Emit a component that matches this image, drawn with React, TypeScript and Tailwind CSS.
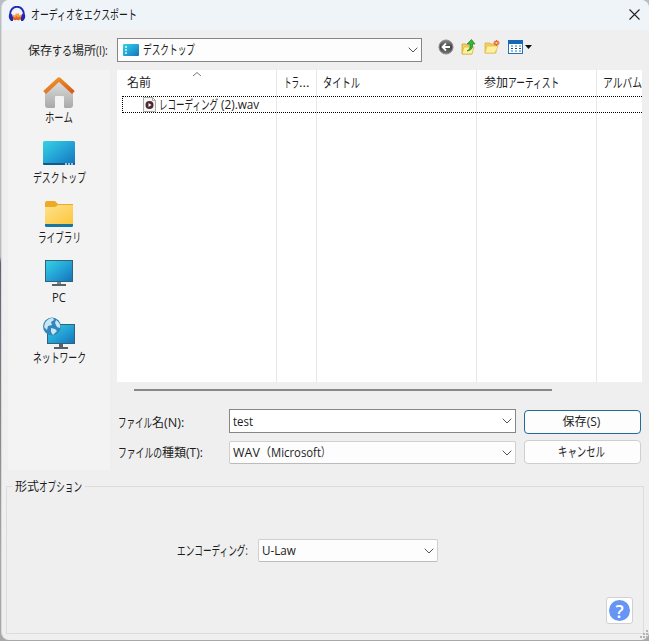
import { ReactNode, useLayoutEffect, useRef } from "react";

type FitProps = { w: number; children: ReactNode; className?: string };

function Fit({ w, children, className = "" }: FitProps) {
  const ref = useRef<HTMLSpanElement>(null);

  useLayoutEffect(() => {
    const el = ref.current;
    if (el) el.style.transform = `scaleX(${w / el.offsetWidth})`;
  }, [w]);

  return (
    <span className={`inline-block shrink-0 ${className}`} style={{ width: w }}>
      <span ref={ref} className="inline-block origin-left whitespace-pre">
        {children}
      </span>
    </span>
  );
}

function Kana({ className = "", ...props }: FitProps) {
  return <Fit {...props} className={`-translate-y-px text-[13px] ${className}`} />;
}

function Chevron() {
  return (
    <svg width="10" height="6" viewBox="0 0 10 6" fill="none" className="shrink-0">
      <path d="M.7.7 5 5 9.3.7" stroke="#555" strokeWidth="1" />
    </svg>
  );
}

function Gradients() {
  return (
    <svg width="0" height="0" className="absolute">
      <defs>
        <linearGradient id="screen" x1="0" y1="0" x2="1" y2="1">
          <stop stopColor="#35d3e3" />
          <stop offset=".5" stopColor="#24a4d6" />
          <stop offset="1" stopColor="#1273b9" />
        </linearGradient>
        <linearGradient id="roof" x1="0" y1="0" x2="1" y2="1">
          <stop stopColor="#f39a2d" />
          <stop offset="1" stopColor="#d65a18" />
        </linearGradient>
        <linearGradient id="wall" x1="0" y1="0" x2="0" y2="1">
          <stop stopColor="#e2e2e2" />
          <stop offset="1" stopColor="#a9a9a9" />
        </linearGradient>
        <linearGradient id="folder" x1="0" y1="0" x2="1" y2="1">
          <stop stopColor="#ffe28a" />
          <stop offset="1" stopColor="#fbc63d" />
        </linearGradient>
        <linearGradient id="back" x1="0" y1="0" x2="0" y2="1">
          <stop stopColor="#8a8a8a" />
          <stop offset=".5" stopColor="#444" />
          <stop offset="1" stopColor="#777" />
        </linearGradient>
      </defs>
    </svg>
  );
}

function HomeIcon() {
  return (
    <svg width="34" height="32" viewBox="0 0 34 32">
      <path d="M3 15 17 3l14 12v14q0 3-3 3h-5q-1 0-1-1V21q0-1-1-1h-7q-1 0-1 1v10q0 1-1 1H6q-3 0-3-3z" fill="url(#wall)" />
      <path d="M2.600 16.500 17 3.300l14.400 13.200" fill="none" stroke="url(#roof)" strokeWidth="4" strokeLinejoin="round" />
    </svg>
  );
}

function DesktopIcon() {
  return (
    <svg width="34" height="32" viewBox="0 0 34 32">
      <rect x="1" y="5" width="32" height="24" rx="1.5" fill="url(#screen)" />
      <path d="M1 27h32v.8q0 1.200-1.500 1.200h-29Q1 29 1 27.800z" fill="#125a89" />
      <path d="M23 28h2m1 0h2m1 0h2" stroke="#c5eefa" strokeWidth="1.5" />
    </svg>
  );
}

function LibraryIcon() {
  return (
    <svg width="34" height="32" viewBox="0 0 34 32">
      <path d="M3 7q0-2 2-2h8l3 3h15v10H3z" fill="#eda928" />
      <path d="M3 11h10l3-2h15v19H3z" fill="url(#folder)" />
      <path d="M3 28h28v1.500q0 1.500-1.500 1.500h-25Q3 31 3 29.500z" fill="#17779f" />
    </svg>
  );
}

function PcIcon() {
  return (
    <svg width="34" height="32" viewBox="0 0 34 32">
      <rect x="3.500" y="4.500" width="27" height="21" fill="url(#screen)" stroke="#34627b" />
      <path d="M15 26h4v3h-4z" fill="#7d8990" />
      <path d="M10 28h14v2H10z" fill="#56616a" />
    </svg>
  );
}

function NetworkIcon() {
  return (
    <svg width="34" height="34" viewBox="0 0 34 34">
      <rect x="5.500" y="8.500" width="27" height="19" fill="url(#screen)" stroke="#34627b" />
      <path d="M17 28h4v3h-4zM12 31h14v2H12z" fill="#56616a" />
      <circle cx="10" cy="10.500" r="9" fill="#3386bb" />
      <path d="M3 7q3-5 8-5l1 2-3 2 1 3-4 1-1 4-3-3zM14 4q5 3 4 8l-3-1-2-4zM9 12l4 1 2 2-4 4-2-3z" fill="#c8e6f4" />
    </svg>
  );
}

const places = [
  { label: "ホーム", w: 28, icon: <HomeIcon /> },
  { label: "デスクトップ", w: 53, icon: <DesktopIcon /> },
  { label: "ライブラリ", w: 43, icon: <LibraryIcon /> },
  { label: "PC", w: 14, icon: <PcIcon /> },
  { label: "ネットワーク", w: 53, icon: <NetworkIcon /> },
];

function TitleBar() {
  return (
    <header className="flex h-[30px] shrink-0 items-center bg-[#eff4f9] pr-[9px] pl-[6px]">
      <svg width="18" height="16" viewBox="0 0 18 16" className="mr-[5px] -mt-[2px]">
        <path d="M4 11.500 5.500 8.500l1.500 1 1-2.500 1 1 1.500-1 1 2.500 2-1 .5 3-1 2.500H5z" fill="#f4a04a" />
        <path d="m4 11.500 2-1 1 1.500 1.500-2 1.500 2 1-1.500 3 1.500-2 1-1.500 1.500-2-1-1.500 1-1.500-1.500z" fill="#e4611c" />
        <path d="M2.200 10C.8-2.200 17.200-2.200 15.800 10" fill="none" stroke="#2429b5" strokeWidth="2" />
        <path d="M1 8.500 4 8q1.500 3.500 1 7H3Q0 12 1 8.500zM17 8.500 14 8q-1.500 3.500-1 7h2q3-3 2-6.500z" fill="#2429b5" />
      </svg>
      <Kana w={106}>オーディオをエクスポート</Kana>
      <svg width="11" height="11" viewBox="0 0 11 11" className="ml-auto -mt-[2px]">
        <path d="m.5.5 10 10m0-10-10 10" stroke="#222" strokeWidth="1.1" />
      </svg>
    </header>
  );
}

function Toolbar() {
  return (
    <div className="flex items-center">
      <svg width="16" height="16" viewBox="0 0 16 16">
        <circle cx="8" cy="8" r="7" fill="url(#back)" stroke="#888" />
        <path d="M12 8H5m3-3.500L4.500 8 8 11.500" fill="none" stroke="#fff" strokeWidth="1.800" />
      </svg>
      <svg width="16" height="16" viewBox="0 0 16 16" className="ml-[7px]">
        <path d="M1 5h4l1 1h5v9H1z" fill="#f3d05d" stroke="#c49b2e" strokeWidth=".7" />
        <path d="m1 15 2-7h10l-2 7z" fill="#fff09b" stroke="#d7b43f" strokeWidth=".7" />
        <path d="M6 12q4-2 3-7H6l4.500-4.500L14 5h-2.500q1 6-5.500 7" fill="#36b53b" stroke="#188324" strokeWidth=".7" />
      </svg>
      <svg width="17" height="16" viewBox="0 0 17 16" className="ml-[7px]">
        <path d="M1 4h5l1 1h5v9H1z" fill="#f3d15f" stroke="#d6aa3b" strokeWidth=".7" />
        <path d="m1 14 2-7h11l-3 7z" fill="#fff0a0" stroke="#e1bb4c" strokeWidth=".7" />
        <path d="M12.500 1v6m-3-3h6m-5-2 4 4m0-4-4 4" stroke="#e66a30" strokeWidth="1.300" />
        <circle cx="12.500" cy="4" r="1.100" fill="#ffe18d" />
      </svg>
      <svg width="16" height="15" viewBox="0 0 16 15" className="ml-[7px]">
        <rect x=".5" y=".5" width="14" height="13" fill="#fff" stroke="#2474b5" />
        <path d="M0 0h15v4H0z" fill="#1768b4" />
        <path d="M3 6h2m2 0h2m2 0h2M3 11h2m2 0h2m2 0h2" stroke="#8fbfda" strokeWidth="2" />
        <path d="M3 8.500h2m2 0h2m2 0h2" stroke="#264e70" strokeWidth="1.200" />
      </svg>
      <svg width="7" height="4" viewBox="0 0 7 4" className="ml-px">
        <path d="M0 0h7L3.500 4z" fill="#111" />
      </svg>
    </div>
  );
}

function FileList() {
  return (
    <div className="relative flex h-[312px] w-[525px] flex-col bg-white">
      <div className="flex grow [&>div]:border-r [&>div]:border-[#e8e8e8]">
        <div className="relative w-[160px] pt-[4px] pl-[10px]">
          <Fit w={24}>名前</Fit>
          <svg width="8" height="4" viewBox="0 0 8 4" className="absolute top-[2px] left-[76px]">
            <path d="m0 4 4-3.500L8 4" fill="none" stroke="#777" />
          </svg>
        </div>
        <div className="flex w-[40px] pt-[4px] pl-[7px]"><Kana w={15}>トラ</Kana><Fit w={10}>...</Fit></div>
        <div className="w-[160px] pt-[4px] pl-[6px]"><Kana w={37}>タイトル</Kana></div>
        <div className="flex w-[120px] pt-[4px] pl-[7px]"><Fit w={24}>参加</Fit><Kana w={51}>アーティスト</Kana></div>
        <span className="pt-[4px] pl-[6px]"><Kana w={39}>アルバム</Kana></span>
      </div>
      {/* focused row spans every column */}
      <div className="absolute top-[26px] right-0 left-[5px] flex h-[17px] items-center border border-r-0 border-dotted border-black pl-[20px]">
        <svg width="13" height="15" viewBox="0 0 13 15" className="mr-[3px]">
          <path d="M.5.500h9l3 3v11H.5z" fill="#f5f5f5" stroke="#aaa" />
          <path d="M9.500.500v3h3" fill="none" stroke="#aaa" />
          <circle cx="6.500" cy="8" r="4" fill="#4d2930" />
          <path d="m5.500 6 3 2-3 2z" fill="#fff" />
        </svg>
        <Kana w={59}>レコーディング</Kana>
        <Fit w={41}>{" (2).wav"}</Fit>
      </div>
    </div>
  );
}

function FileDialog() {
  return (
    <div className="flex h-[440px] pl-[6px]">
      <div className="w-[102px] shrink-0 pt-[8px]">
        <div className="flex h-[24px] items-center pt-[2px] pl-[20px]">
          <Fit w={24}>保存</Fit><Kana w={20}>する</Kana><Fit w={24}>場所</Fit><Fit w={12}>(I):</Fit>
        </div>
        <nav className="mt-[8px] flex h-[400px] flex-col bg-[#f3f3f3] pt-[6px]">
          {places.map((place) => (
            <div key={place.label} className="flex h-[60px] flex-col items-center">
              <span className="flex h-[33px] shrink-0 items-start">{place.icon}</span>
              {place.label === "PC" ? (
                <Fit w={place.w} className="h-[18px]">{place.label}</Fit>
              ) : (
                <Kana w={place.w} className="h-[18px]">{place.label}</Kana>
              )}
            </div>
          ))}
        </nav>
      </div>
      <div className="ml-[7px] w-[525px] pt-[8px]">
        <div className="flex items-center">
          <div className="mr-[16px] flex h-[24px] w-[305px] items-center border border-[#868686] bg-[#fdfdfd] pr-[3px] pl-[5px]">
            <svg width="16" height="12" viewBox="0 0 16 12" className="mr-[4px]">
              <rect width="16" height="12" rx="1" fill="url(#screen)" />
              <path d="M2 3h2M2 6h2M2 9h2" stroke="#d8f7fc" strokeWidth="1.300" />
            </svg>
            <Kana w={52} className="mr-auto">デスクトップ</Kana>
            <Chevron />
          </div>
          <div className="-mt-[6px]"><Toolbar /></div>
        </div>
        <div className="mt-[8px]"><FileList /></div>
        <div className="mt-[7px] ml-[17px] h-[2px] w-[418px] bg-[#888]" />
        <div className="mt-[18px] flex">
          <div className="w-[112px] shrink-0 pl-px">
            <div className="flex h-[28px] items-center">
              <Kana w={34}>ファイル</Kana><Fit w={12}>名</Fit><Fit w={20}>(N):</Fit>
            </div>
            <div className="mt-[2px] flex h-[28px] items-center">
              <Kana w={44}>ファイルの</Kana><Fit w={24}>種類</Fit><Fit w={17}>(T):</Fit>
            </div>
          </div>
          <div className="w-[287px] shrink-0">
            <div className="flex h-[24px] items-center justify-between border border-[#868686] bg-white pr-[3px] pl-[3px]">
              <Fit w={20} className="pt-[2px]">test</Fit>
              <Chevron />
            </div>
            <div className="mt-[8px] flex h-[23px] items-center justify-between rounded-[2px] border border-[#cfcfcf] border-b-[#bbb] bg-[#fdfdfd] pr-[3px] pl-[3px]">
              <span className="flex"><Fit w={27}>WAV</Fit><Fit w={11}>（</Fit><Fit w={50}>Microsoft</Fit><Fit w={9}>）</Fit></span>
              <Chevron />
            </div>
          </div>
          <div className="ml-[8px] w-[117px] pt-px">
            <button className="flex h-[24px] w-full items-center justify-center rounded-[4px] border border-[#216b9b] bg-[#fdfdfd] pr-[2px]">
              <Fit w={24}>保存</Fit><Fit w={14}>(S)</Fit>
            </button>
            <button className="mt-[6px] flex h-[24px] w-full items-center justify-center rounded-[4px] border border-[#cfcfcf] bg-[#fdfdfd] pr-[2px]">
              <Kana w={47}>キャンセル</Kana>
            </button>
          </div>
        </div>
      </div>
    </div>
  );
}

function FormatOptions() {
  return (
    <section className="mt-[9px] mr-[5px] ml-[4px] h-[155px]">
      <div className="flex h-[14px] items-center">
        <span className="h-px w-[6px] bg-[#dcdcdc]" />
        <span className="flex px-[3px] pt-px"><Fit w={24}>形式</Fit><Kana w={43}>オプション</Kana></span>
        <span className="h-px grow bg-[#dcdcdc]" />
      </div>
      <div className="-mt-[7px] h-[148px] border border-t-0 border-[#dcdcdc]">
        <div className="flex items-center pt-[53px] pl-[170px]">
          <Kana w={71}>エンコーディング:</Kana>
          <div className="ml-[10px] flex h-[23px] w-[180px] items-center justify-between rounded-[2px] border border-[#cfcfcf] border-b-[#bbb] bg-[#fdfdfd] pr-[3px] pl-[3px]">
            <Fit w={34}>U-Law</Fit>
            <Chevron />
          </div>
        </div>
        <button className="mt-[35px] mr-[10px] ml-auto flex h-[27px] w-[27px] items-center justify-center rounded-[3px] border border-[#d0d0d0] bg-white">
          <span className="flex h-[21px] w-[21px] items-center justify-center rounded-full bg-[#6695f5] text-[18px] font-semibold text-white">?</span>
        </button>
      </div>
    </section>
  );
}

export default function App() {
  return (
    <div className="h-[641px] w-[649px] overflow-hidden bg-linear-to-b from-[#b9bdc4] from-40% via-[#655f70] via-41% to-[#a8a8a8] to-88% pl-px font-['Open_Sans','Noto_Sans_CJK_JP',sans-serif] text-[12px] leading-[18px] text-[#1c1c1c]">
      <Gradients />
      <main className="relative flex h-[640px] w-[648px] flex-col overflow-hidden rounded-[8px] border-l border-[#d9d9d9] bg-[#efefef]">
        <TitleBar />
        <FileDialog />
        <FormatOptions />
        <svg width="10" height="10" viewBox="0 0 10 10" className="absolute right-0 bottom-[1px]">
          <path d="M7 1h2v2H7zM4 4h2v2H4zM7 4h2v2H7zM1 7h2v2H1zM4 7h2v2H4zM7 7h2v2H7z" fill="#b3b3b3" />
        </svg>
      </main>
    </div>
  );
}
